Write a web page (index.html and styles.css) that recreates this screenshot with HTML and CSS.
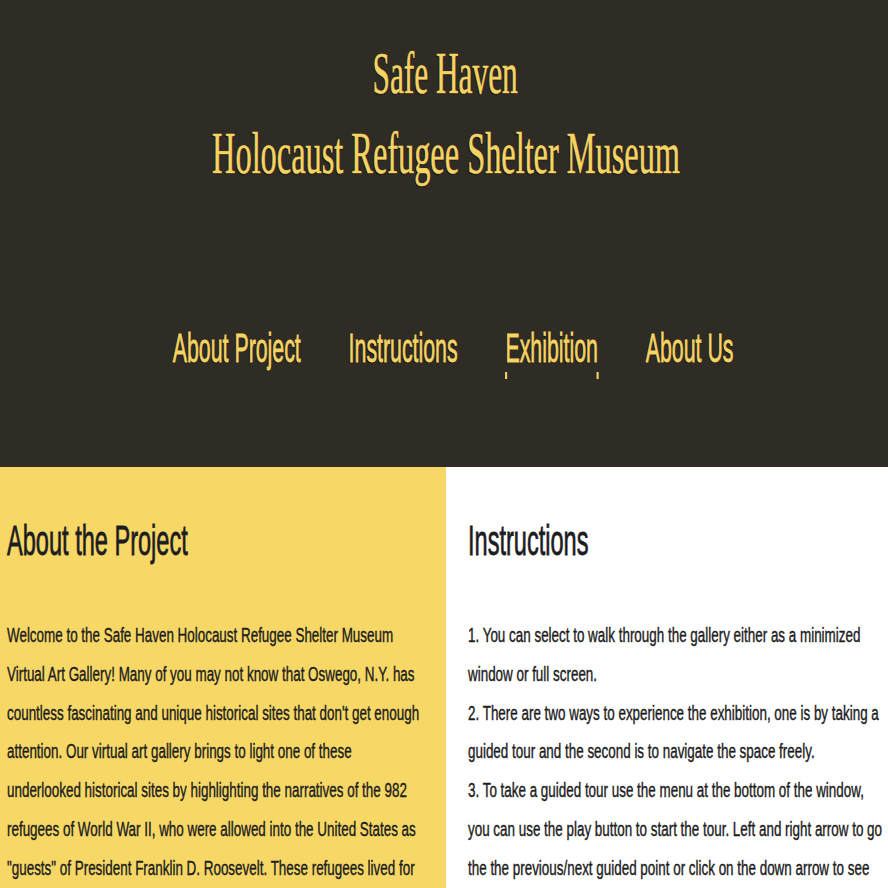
FILE: index.html
```html
<!DOCTYPE html>
<html lang="en">
<head>
<meta charset="utf-8">
<title>Safe Haven Holocaust Refugee Shelter Museum</title>
<link rel="stylesheet" href="styles.css">
</head>
<body>
<header class="site-header">
  <h1 class="site-title">
    <span class="title-line title-line--first"><span class="title-text">Safe Haven</span></span>
    <span class="title-line title-line--second"><span class="title-text">Holocaust Refugee Shelter Museum</span></span>
  </h1>
  <nav class="site-nav">
    <ul class="nav-list">
      <li class="nav-item"><a class="nav-link" href="#about">About Project</a></li>
      <li class="nav-item"><a class="nav-link" href="#instructions">Instructions</a></li>
      <li class="nav-item"><a class="nav-link nav-link--active" href="#exhibition">Exhibition</a></li>
      <li class="nav-item"><a class="nav-link" href="#about-us">About Us</a></li>
    </ul>
  </nav>
</header>
<main class="panels">
  <section class="panel panel--about" id="about">
    <h2 class="panel-title"><span class="panel-title-text">About the Project</span></h2>
    <div class="panel-body panel-body--about">
      <p class="panel-text">Welcome to the Safe Haven Holocaust Refugee Shelter Museum Virtual Art Gallery! Many of you may not know that Oswego, N.Y. has countless fascinating and unique historical sites that don't get enough attention. Our virtual art gallery brings to light one of these underlooked historical sites by highlighting the narratives of the 982 refugees of World War II, who were allowed into the United States as "guests" of President Franklin D. Roosevelt. These refugees lived for</p>
    </div>
  </section>
  <section class="panel panel--instructions" id="instructions">
    <h2 class="panel-title"><span class="panel-title-text">Instructions</span></h2>
    <div class="panel-body panel-body--instructions">
      <p class="panel-step">1. You can select to walk through the gallery either as a minimized window or full screen.</p>
      <p class="panel-step">2. There are two ways to experience the exhibition, one is by taking a guided tour and the second is to navigate the space freely.</p>
      <p class="panel-step">3. To take a guided tour use the menu at the bottom of the window, you can use the play button to start the tour. Left and right arrow to go the the previous/next guided point or click on the down arrow to see</p>
    </div>
  </section>
</main>
</body>
</html>
```
FILE: styles.css
```css
html, body {
  margin: 0;
  padding: 0;
  overflow-x: hidden;
}

body {
  font-family: "Liberation Sans", Arial, sans-serif;
  background: #ffffff;
  color: #1c1c1c;
}

/* ---------- Header ---------- */
.site-header {
  background: #2f2c25;
  padding: 33px 0 94px;
  text-align: center;
  overflow: hidden;
}

.site-title {
  margin: 0;
  font-family: "Liberation Serif", "Times New Roman", serif;
  font-weight: normal;
  font-size: 60px;
  line-height: 80px;
  color: #f6d464;
}

.title-line {
  display: block;
  white-space: nowrap;
}

.title-line--first {
  padding-left: 3px;
}

.title-line--second {
  padding-left: 4px;
}

.title-text {
  display: inline-block;
  transform-origin: 50% 50%;
  -webkit-text-stroke: 0.6px #f6d464;
  text-shadow: -1px 1px 1px #0c0b08;
}

.title-line--first .title-text {
  transform: scaleX(0.522);
}

.title-line--second .title-text {
  transform: scaleX(0.539);
}

.site-nav {
  margin-top: 130px;
  display: flex;
  justify-content: center;
}

.nav-list {
  list-style: none;
  margin: 0 0 0 18px;
  padding: 0;
  display: flex;
  gap: 92px;
  flex-shrink: 0;
  transform: scaleX(0.52);
  transform-origin: 50% 50%;
}

.nav-item {
  white-space: nowrap;
}

.nav-link {
  position: relative;
  display: inline-block;
  font-size: 41px;
  line-height: 50px;
  color: #f6d464;
  text-decoration: none;
  -webkit-text-stroke: 0.8px #f6d464;
  text-shadow: -1px 1px 1px #0c0b08;
}

.nav-link--active::after {
  content: "";
  position: absolute;
  left: -1px;
  right: -1px;
  top: 49px;
  height: 7px;
  border-left: 4px solid #f6d464;
  border-right: 4px solid #f6d464;
}

/* ---------- Panels ---------- */
.panels {
  display: grid;
  grid-template-columns: 446px 1fr;
}

.panel {
  padding-top: 48px;
  overflow: hidden;
  min-height: 440px;
}

.panel--about {
  background: #f7d866;
  padding-left: 7px;
}

.panel--instructions {
  background: #ffffff;
  padding-left: 22px;
}

.panel-title {
  margin: 0;
  font-size: 43px;
  line-height: 50px;
  font-weight: normal;
  color: #1c1c22;
  white-space: nowrap;
}

.panel-title-text {
  display: inline-block;
  transform: scaleX(0.548);
  transform-origin: 0 50%;
  -webkit-text-stroke: 0.8px #1c1c22;
}

.panel-body {
  margin-top: 51px;
  font-size: 20px;
  line-height: 38.8px;
  transform: scaleX(0.671);
  transform-origin: 0 0;
  -webkit-text-stroke: 0.4px #1c1c1c;
}

.panel-body--about {
  width: 626px;
}

.panel-body--instructions {
  width: 622px;
}

.panel-text,
.panel-step {
  margin: 0;
}
```
